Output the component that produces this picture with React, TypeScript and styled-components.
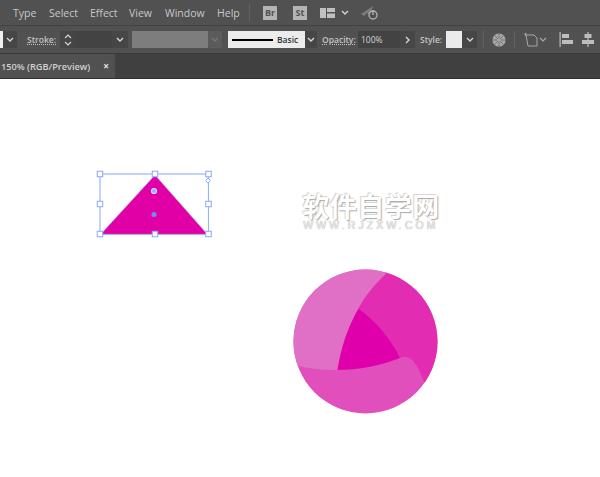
import styled, { createGlobalStyle } from 'styled-components';

const GlobalStyle = createGlobalStyle`
  html, body { margin: 0; padding: 0; background: #fff; }
  body { font-family: "Open Sans", "Liberation Sans", sans-serif; }
`;

const Page = styled.div`
  width: 600px;
  height: 477px;
  display: flex;
  flex-direction: column;
  overflow: hidden;
`;

// ─── Menu bar ─────────────────────────────────────────────────────────────────

const MenuBar = styled.div`
  height: 25px;
  flex: none;
  display: flex;
  align-items: center;
  padding-left: 13px;
  background: #515151;
  border-bottom: 1px solid #424242;
`;

const MenuItem = styled.span<{ $w: number }>`
  width: ${({ $w }) => $w}px;
  font-size: 10.5px;
  color: #c8c8c8;
`;

const Divider = styled.div<{ $ml?: number; $mr?: number }>`
  width: 1px;
  height: 17px;
  flex: none;
  background: #626262;
  margin-left: ${({ $ml }) => $ml ?? 0}px;
  margin-right: ${({ $mr }) => $mr ?? 0}px;
`;

const AppBadge = styled.div<{ $mr: number }>`
  width: 14px;
  height: 14px;
  flex: none;
  margin-right: ${({ $mr }) => $mr}px;
  background: #b4b4b4;
  color: #505050;
  font-size: 9px;
  font-weight: 700;
  display: flex;
  align-items: center;
  justify-content: center;
`;

const IconSlot = styled.svg<{ $ml?: number }>`
  flex: none;
  display: block;
  margin-left: ${({ $ml }) => $ml ?? 0}px;
`;

// ─── Options bar ──────────────────────────────────────────────────────────────

const OptionsBar = styled.div`
  height: 27px;
  flex: none;
  display: flex;
  align-items: center;
  background: #515151;
  border-bottom: 1px solid #3a3a3a;
`;

const Swatch = styled.div<{ $w: number; $bg: string; $ml?: number }>`
  width: ${({ $w }) => $w}px;
  height: 17px;
  flex: none;
  background: ${({ $bg }) => $bg};
  margin-left: ${({ $ml }) => $ml ?? 0}px;
`;

const Chevron = styled.div<{ $w?: number; $mr?: number; $bg?: string }>`
  width: ${({ $w }) => $w ?? 15}px;
  height: 17px;
  flex: none;
  margin-right: ${({ $mr }) => $mr ?? 0}px;
  background: ${({ $bg }) => $bg ?? '#464646'};
  display: flex;
  align-items: center;
  justify-content: center;
`;

const Label = styled.span<{ $w: number; $underline?: boolean }>`
  width: ${({ $w }) => $w}px;
  flex: none;
  font-size: 8.5px;
  font-weight: 600;
  color: #c4c4c4;
  text-decoration: ${({ $underline }) => ($underline ? 'underline dotted' : 'none')};
`;

const Field = styled.div<{ $w: number }>`
  width: ${({ $w }) => $w}px;
  height: 17px;
  flex: none;
  background: #434343;
  color: #d4d4d4;
  font-size: 8.5px;
  line-height: 17px;
  padding-left: 3px;
  box-sizing: border-box;
`;

const StrokePreview = styled.div`
  width: 77px;
  height: 17px;
  flex: none;
  margin-left: 6px;
  background: #ececec;
  display: flex;
  align-items: center;
  gap: 4px;
  padding-left: 4px;
  box-sizing: border-box;
  font-size: 8.5px;
  font-weight: 600;
  color: #333;
`;

const StrokeLine = styled.div`
  width: 41px;
  height: 2px;
  flex: none;
  background: #000;
`;

const Stepper = styled.div`
  width: 16px;
  height: 17px;
  flex: none;
  background: #464646;
  display: flex;
  align-items: center;
  justify-content: center;
`;

// ─── Tab bar ──────────────────────────────────────────────────────────────────

const TabBar = styled.div`
  height: 24px;
  flex: none;
  display: flex;
  background: #404040;
  border-bottom: 1px solid #2f2f2f;
`;

const Tab = styled.div`
  width: 115px;
  display: flex;
  align-items: center;
  justify-content: space-between;
  padding: 0 6px 0 1px;
  box-sizing: border-box;
  background: #515151;
  font-size: 9.2px;
  font-weight: 600;
  color: #d0d0d0;
`;

const TabClose = styled.span`
  font-size: 10px;
  font-weight: 700;
  color: #e6e6e6;
`;

// ─── Canvas ───────────────────────────────────────────────────────────────────

const Canvas = styled.div`
  position: relative;
  flex: 1;
  background: #fff;
`;

const Artwork = styled.svg`
  position: absolute;
  left: 0;
  top: 0;
`;

const Watermark = styled.div`
  position: absolute;
  left: 300px;
  top: 114px;
  width: 142px;
  display: flex;
  flex-direction: column;
  align-items: center;
  gap: 2px;
`;

const WatermarkTitle = styled.div`
  font-family: "Noto Sans CJK SC", sans-serif;
  font-size: 27px;
  font-weight: 700;
  line-height: 26px;
  letter-spacing: 0.5px;
  color: #fff;
  text-shadow: 1px 1px 1px #a8a8a8, -1px -1px 0 #d6d6d6;
`;

const WatermarkUrl = styled.div`
  font-family: "Liberation Sans", sans-serif;
  font-size: 10.5px;
  line-height: 9px;
  letter-spacing: 3.1px;
  white-space: nowrap;
  color: #ececec;
  text-shadow: 0 0 1px #8e8e8e;
`;

// ─── Small drawings ───────────────────────────────────────────────────────────

function ChevronIcon({ color = '#d6d6d6' }: { color?: string }) {
  return (
    <svg width="8" height="5" viewBox="0 0 8 5">
      <path d="M1 1l3 3 3-3" fill="none" stroke={color} strokeWidth="1.4" />
    </svg>
  );
}

function Handle({ x, y }: { x: number; y: number }) {
  return <rect x={x - 2.75} y={y - 2.75} width="5.5" height="5.5" fill="#fff" stroke="#8aa6ff" strokeWidth="1" />;
}

export default function App() {
  return (
    <Page>
      <GlobalStyle />
      <MenuBar>
        <MenuItem $w={36}>Type</MenuItem>
        <MenuItem $w={41}>Select</MenuItem>
        <MenuItem $w={39}>Effect</MenuItem>
        <MenuItem $w={36}>View</MenuItem>
        <MenuItem $w={52}>Window</MenuItem>
        <MenuItem $w={32}>Help</MenuItem>
        <Divider $mr={13} />
        <AppBadge $mr={16}>Br</AppBadge>
        <AppBadge $mr={13}>St</AppBadge>
        <IconSlot width="15" height="10" viewBox="0 0 15 10">
          <path d="M0 0h6v10H0zM7 0h8v4H7zM7 5.500h8V10H7z" fill="#c0c0c0" />
        </IconSlot>
        <IconSlot $ml={6} width="8" height="5" viewBox="0 0 8 5">
          <path d="M1 1l3 3 3-3" fill="none" stroke="#d6d6d6" strokeWidth="1.4" />
        </IconSlot>
        <IconSlot $ml={11} width="20" height="16" viewBox="0 0 20 16">
          <path d="M1 9L13 1l-3 8-3-1-3 3z" fill="#7c7c7c" />
          <circle cx="13" cy="10" r="4" fill="none" stroke="#b4b4b4" strokeWidth="1.3" />
          <path d="M13 5v5" stroke="#b4b4b4" strokeWidth="1.3" />
        </IconSlot>
      </MenuBar>

      <OptionsBar>
        <Swatch $w={3} $bg="#f0f0f0" />
        <Chevron $w={14} $mr={10}><ChevronIcon /></Chevron>
        <Label $w={33} $underline>Stroke:</Label>
        <Stepper>
          <svg width="8" height="12" viewBox="0 0 8 12">
            <path d="M1 4l3-3 3 3M1 8l3 3 3-3" fill="none" stroke="#d6d6d6" strokeWidth="1.2" />
          </svg>
        </Stepper>
        <Field $w={36} />
        <Chevron $w={16} $mr={4}><ChevronIcon /></Chevron>
        <Swatch $w={76} $bg="#7d7d7d" />
        <Chevron $w={14} $bg="#5b5b5b"><ChevronIcon color="#777" /></Chevron>
        <StrokePreview>
          <StrokeLine />
          Basic
        </StrokePreview>
        <Chevron $w={12} $mr={5}><ChevronIcon /></Chevron>
        <Label $w={36} $underline>Opacity:</Label>
        <Field $w={42}>100%</Field>
        <Chevron $w={15} $mr={5}>
          <svg width="5" height="8" viewBox="0 0 5 8">
            <path d="M1 1l3 3-3 3" fill="none" stroke="#d6d6d6" strokeWidth="1.4" />
          </svg>
        </Chevron>
        <Label $w={26}>Style:</Label>
        <Swatch $w={16} $bg="#ebebeb" />
        <Chevron $w={15} $mr={6}><ChevronIcon /></Chevron>
        <Divider $mr={8} />
        <IconSlot width="14" height="14" viewBox="0 0 16 16">
          <circle cx="8" cy="8" r="7.500" fill="#a8a8a8" />
          <path d="M8 1v14M1 8h14M3 3l10 10M13 3L3 13" stroke="#696969" strokeWidth="1" />
          <circle cx="8" cy="8" r="2" fill="#a8a8a8" />
        </IconSlot>
        <Divider $ml={8} $mr={9} />
        <IconSlot width="15" height="14" viewBox="0 0 15 14">
          <path d="M2 2h8l3 3v8H4z" fill="none" stroke="#a8a8a8" strokeWidth="1" />
          <path d="M0 1h3M1.500 0v3" stroke="#a8a8a8" strokeWidth="0.8" />
        </IconSlot>
        <IconSlot width="8" height="5" viewBox="0 0 8 5">
          <path d="M1 1l3 3 3-3" fill="none" stroke="#a8a8a8" strokeWidth="1.2" />
        </IconSlot>
        <IconSlot $ml={12} width="14" height="15" viewBox="0 0 14 15">
          <path d="M.5 0h1.200v15H.5zM3 2h7v4H3zM3 8h11v4H3z" fill="#bdbdbd" />
        </IconSlot>
        <IconSlot $ml={9} width="12" height="15" viewBox="0 0 12 15">
          <path d="M5.400 0h1.200v15H5.400zM2.500 2h7v4h-7zM0 8h12v4H0z" fill="#bdbdbd" />
        </IconSlot>
      </OptionsBar>

      <TabBar>
        <Tab>
          150% (RGB/Preview)
          <TabClose>×</TabClose>
        </Tab>
      </TabBar>

      <Canvas>
        <Artwork width="600" height="398" viewBox="0 79 600 398">
          <defs>
            <clipPath id="disc">
              <circle cx="365.500" cy="341.500" r="72" />
            </clipPath>
          </defs>

          {/* selected triangle */}
          <path d="M155 175L208 235H100z" fill="#e000a6" />
          <rect x="100" y="174" width="108.500" height="60.500" fill="none" stroke="#9db4ff" strokeWidth="1.200" />
          <path d="M155 175L208 235M155 175L100 235" fill="none" stroke="#9db4ff" strokeWidth="0.6" />
          <Handle x={100} y={174} />
          <Handle x={155} y={174} />
          <Handle x={208.500} y={174} />
          <Handle x={100} y={204} />
          <Handle x={208.500} y={204} />
          <Handle x={100} y={234} />
          <Handle x={155} y={234} />
          <Handle x={208.500} y={234} />
          <path d="M208 178l2.500 2.500-2.500 2.500-2.500-2.500z" fill="#fff" stroke="#8aa6ff" />
          <circle cx="154" cy="191" r="2.500" fill="#8fb0ff" stroke="#cfdcff" strokeWidth="1.200" />
          <circle cx="154" cy="214.500" r="2.500" fill="#6f8df5" />

          {/* disc made of pieces */}
          <g clipPath="url(#disc)">
            <rect x="290" y="265" width="152" height="152" fill="#e04fbb" />
            <path
              d="M296 365C309 369 323 370.500 337.500 370C341 347 348 327 358.500 308.500C366 295 375 284 386 274L380 260H285V362z"
              fill="#e06fc6"
            />
            <path
              d="M386 274C375 284 366 295 358.500 308.500C375 321 390 337 400 358C402 357 405 356 408 357.500C415 360 420 371 424 382L445 390V262H380z"
              fill="#e22db3"
            />
            <path d="M358.500 308.500C375 321 390 337 400 358C380 366 358 370 337.500 370C341 347 348 327 358.500 308.500z" fill="#e000ab" />
          </g>
        </Artwork>

        <Watermark>
          <WatermarkTitle>软件自学网</WatermarkTitle>
          <WatermarkUrl>WWW.RJZXW.COM</WatermarkUrl>
        </Watermark>
      </Canvas>
    </Page>
  );
}
